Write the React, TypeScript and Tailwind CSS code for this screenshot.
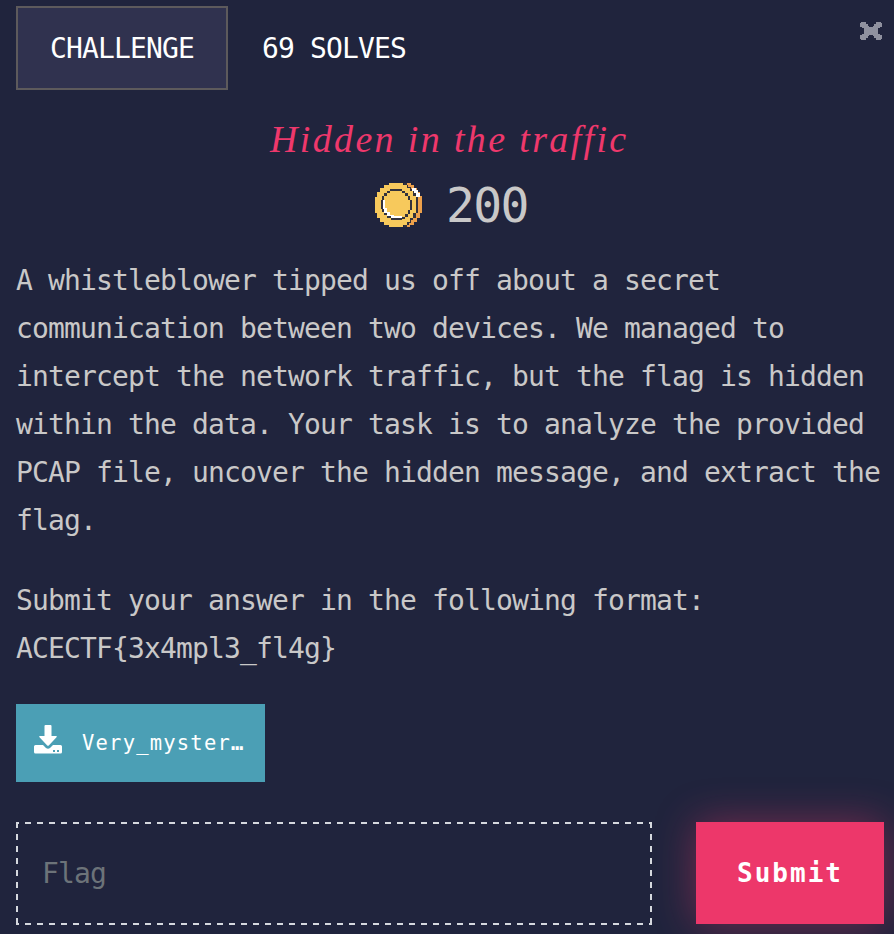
export default function App() {
  return (
    <div className="h-[934px] w-[894px] overflow-hidden bg-[#20243d] px-4 pt-1.5 font-['DejaVu_Sans_Mono','Liberation_Mono',monospace] text-[28px] leading-[48px] tracking-[-0.857px] text-[#c9c8c8]">
      <header className="flex h-[84px] items-start text-white">
        <div className="flex h-[84px] w-[212px] items-center border-2 border-[#5d5a5c] bg-[#30324f] pt-0.5 pl-8">CHALLENGE</div>
        <div className="ml-[34px] flex h-[84px] items-center pt-0.5">69 SOLVES</div>
        <button aria-label="Close" className="mt-4 mr-[-4px] ml-auto">
          <svg width="22" height="18" viewBox="0 0 22 18" fill="#8f919f">
            <path d="M1 0H6V2H8V4H9V5H13V4H14V2H16V0H21V1H22V5H20V6H18V12H20V13H22V17H21V18H16V16H14V14H13V13H9V14H8V16H6V18H1V17H0V13H2V12H4V6H2V5H0V1H1Z" />
          </svg>
        </button>
      </header>
      <h1 className="mt-6 h-[60px] whitespace-pre pl-[254px] font-['Liberation_Serif',serif] text-[38px] leading-[50px] tracking-[2.35px] text-[#ee386c] italic">Hidden in the traffic</h1>
      <div className="flex h-[60px] items-center pt-px pl-[358px]">
        <svg className="mt-px" width="50" height="46" viewBox="0 0 50 46" shapeRendering="crispEdges">
          <path fill="#eda04b" d="M30 1H36V3H40V6H43V10H46V14H48V31H46V36H43V40H40V43H36V45H30Z" />
          <path fill="#33323c" d="M30 1H33V3H36V5H39V8H42V13H44V31H42V36H40V38H38V41H35V43H33V45H30Z" />
          <path fill="#eda04b" d="M34 1H37V3H40V7H37V5H34ZM39 36H42V40H39V43H35V41H37V38H39Z" />
          <path fill="#fff" d="M38 6H42V8H44V11H46V15H42V11H40V9H38Z" />
          <path fill="#f7c95c" d="M15 1H29V3H33V6H36V9H39V14H42V31H39V36H36V40H33V43H29V45H15V43H10V40H6V36H3V31H1V15H3V10H6V6H10V3H15Z" />
          <path fill="#33323c" d="M16 7H28V9H31V11H34V14H36V18H38V28H36V32H34V35H31V37H28V38H17V36H13V33H10V30H8V27H7V18H8V14H10V11H13V9H16Z" />
          <path fill="#f7c95c" d="M16 9H28V11H31V14H34V18H36V28H34V32H31V35H28V36H17V34H13V31H10V27H9V18H10V14H13V11H16Z" />
          <path fill="#fff" d="M9 18H11V26H13V30H16V33H20V34H28V36H17V34H13V31H10V27H9Z" />
        </svg>
        <span className="ml-[22px] text-[48px] tracking-[-1.6px]">200</span>
      </div>
      <main className="mt-[23px] whitespace-pre">
        <p>{"A whistleblower tipped us off about a secret\ncommunication between two devices. We managed to\nintercept the network traffic, but the flag is hidden\nwithin the data. Your task is to analyze the provided\nPCAP file, uncover the hidden message, and extract the\nflag."}</p>
        <p className="mt-8">{"Submit your answer in the following format:\nACECTF{3x4mpl3_fl4g}"}</p>
      </main>
      <button className="mt-[31px] flex h-[78px] w-[249px] items-center bg-[#4b9fb5] pl-[18px] text-white">
        <svg className="mb-1.5" width="28" height="30" viewBox="0 0 28 30" fill="currentColor">
          <path d="M11.500 0h5q1 0 1 1v10h4.500q1.500 0 .5 1.200l-7.500 8q-1 1-2 0l-7.500-8q-1-1.200.5-1.200H10.500V1q0-1 1-1Z" />
          <path fillRule="evenodd" d="M1.500 20H9l3 3q2 1.500 4 0l3-3h7.500Q28 20 28 21.500v5.500q0 1.500-1.500 1.500h-25Q0 28.500 0 27v-5.500Q0 20 1.500 20ZM19 25v2h2v-2Zm4 0v2h2v-2Z" />
        </svg>
        <span className="ml-5 text-[20.5px] tracking-[1.2px]">Very_myster<b>…</b></span>
      </button>
      <form className="mt-10 flex">
        <div className="relative h-[103px] w-[636px] shrink-0">
          <svg className="absolute inset-0" width="636" height="103" fill="none" stroke="#d5d8de" strokeWidth="2" strokeDasharray="6 6">
            <path d="M-3 1H636M-3 102H636M1 0V103M635 0V103" />
          </svg>
          <input aria-label="Flag" placeholder="Flag" className="h-[103px] w-full bg-transparent pl-[26px] tracking-[-0.857px] outline-none placeholder:text-[#6c7379]" />
        </div>
        <button type="button" className="ml-11 h-[102px] w-[188px] shrink-0 bg-[#ed376a] text-[26px] font-bold tracking-[2px] text-white shadow-[0_0_40px_rgba(237,55,106,0.42)]">Submit</button>
      </form>
    </div>
  );
}
